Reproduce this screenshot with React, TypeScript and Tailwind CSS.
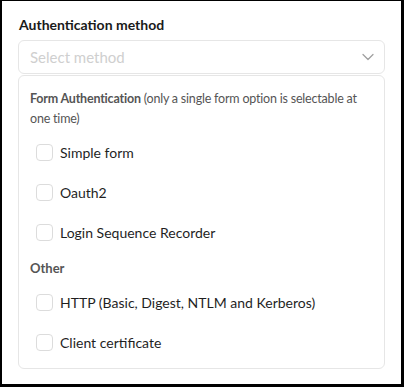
import { ChevronDown } from 'lucide-react';

const formOptions = ['Simple form', 'Oauth2', 'Login Sequence Recorder'];
const otherOptions = ['HTTP (Basic, Digest, NTLM and Kerberos)', 'Client certificate'];

function Option({ label }: { label: string }) {
  return (
    <label className="flex items-center gap-[7px] h-[40px] pl-[6px]">
      <span className="w-[17px] h-[17px] rounded-[4px] border border-[#dcdcdc] bg-white shrink-0" />
      <span className="text-[14px] text-[#1f1f1f]">{label}</span>
    </label>
  );
}

export default function App() {
  return (
    <div className="w-[404px] h-[387px] bg-black pt-[1px] pl-[2px]">
      <div
        className="w-[399px] h-[383px] bg-white pt-[14px] px-[16px]"
        style={{ fontFamily: 'Lato, "Noto Sans", sans-serif' }}
      >
        <div className="text-[14px] font-bold text-[#1a1a1a] leading-[20px] pl-[1px]">
          Authentication method
        </div>
        <div className="mt-[5px] h-[34px] rounded-[6px] border border-[#e6e6e6] flex items-center justify-between pl-[11px] pr-[6px]">
          <span className="text-[15px] text-[#cfcfcf]">Select method</span>
          <ChevronDown className="w-[20px] h-[20px] text-[#a0a0a0]" strokeWidth={1.5} />
        </div>
        <div className="mt-[1px] h-[294px] rounded-[6px] border border-[#e6e6e6] px-[11px] pt-[13px]">
          <p className="text-[12.5px] tracking-[-0.2px] leading-[20px] text-[#555]">
            <span className="font-bold">Form Authentication</span> (only a single form option is selectable at
            one time)
          </p>
          <div className="mt-[3px]">
            {formOptions.map((o) => (
              <Option key={o} label={o} />
            ))}
          </div>
          <div className="mt-[6px] text-[13px] font-bold text-[#555] leading-[20px]">Other</div>
          <div className="mt-[4px]">
            {otherOptions.map((o) => (
              <Option key={o} label={o} />
            ))}
          </div>
        </div>
      </div>
    </div>
  );
}
